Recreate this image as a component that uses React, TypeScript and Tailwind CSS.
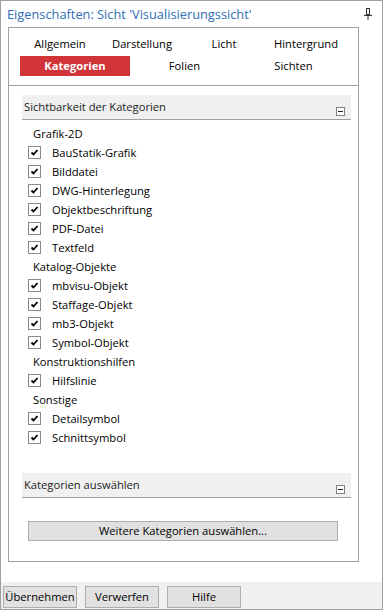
import React from 'react';

type Row = { label: string; group?: boolean };

const rows: Row[] = [
  { label: 'Grafik-2D', group: true },
  { label: 'BauStatik-Grafik' },
  { label: 'Bilddatei' },
  { label: 'DWG-Hinterlegung' },
  { label: 'Objektbeschriftung' },
  { label: 'PDF-Datei' },
  { label: 'Textfeld' },
  { label: 'Katalog-Objekte', group: true },
  { label: 'mbvisu-Objekt' },
  { label: 'Staffage-Objekt' },
  { label: 'mb3-Objekt' },
  { label: 'Symbol-Objekt' },
  { label: 'Konstruktionshilfen', group: true },
  { label: 'Hilfslinie' },
  { label: 'Sonstige', group: true },
  { label: 'Detailsymbol' },
  { label: 'Schnittsymbol' },
];

function Check() {
  return (
    <span className="w-[13px] h-[13px] border border-[#8a8a8a] bg-white flex items-center justify-center shrink-0">
      <svg width="9" height="9" viewBox="0 0 9 9">
        <path d="M1.5 4.5 L3.5 6.5 L7.5 2" fill="none" stroke="#000" strokeWidth="1.8" />
      </svg>
    </span>
  );
}

function Collapse() {
  return (
    <span className="w-[9px] h-[9px] border border-[#808080] bg-white flex items-center justify-center">
      <span className="w-[5px] h-px bg-[#222]" />
    </span>
  );
}

function SectionHeader({ title }: { title: string }) {
  return (
    <div className="h-[25px] bg-[#f0f0f0] border-b border-[#a0a0a0] flex items-center justify-between pl-[2px] pr-[6px]">
      <span className="text-[#222]">{title}</span>
      <span className="mt-[9px]">
        <Collapse />
      </span>
    </div>
  );
}

function Tab({ label, w, active }: { label: string; w: string; active?: boolean }) {
  return (
    <div
      className={`${w} h-[20px] flex items-center justify-center ${
        active ? 'bg-[#d13438] text-white font-bold' : 'text-black'
      }`}
    >
      {label}
    </div>
  );
}

function FooterButton({ label }: { label: string }) {
  return (
    <button className="w-[74px] h-[22px] bg-[#e1e1e1] border border-[#adadad] text-black flex items-center justify-center">
      {label}
    </button>
  );
}

export default function App() {
  return (
    <div
      className="w-[383px] h-[610px] bg-white border border-[#a0a0a0] flex flex-col text-[11.2px] leading-none"
      style={{ fontFamily: '"Open Sans", "Noto Sans", sans-serif' }}
    >
      {/* Title */}
      <div className="h-[26px] flex items-center justify-between pl-[6px] pr-[10px]">
        <span className="text-[12.8px] text-[#2e6db4]">Eigenschaften: Sicht 'Visualisierungssicht'</span>
        <svg width="8" height="12" viewBox="0 0 8 12">
          <rect x="2.5" y="0.5" width="3" height="6" fill="none" stroke="#333" />
          <path d="M0 7.5 H8" stroke="#333" />
          <path d="M4 8 V12" stroke="#333" />
        </svg>
      </div>

      {/* Panel */}
      <div className="ml-[7px] w-[351px] h-[535px] border border-[#a0a0a0] flex flex-col">
        <div className="h-[58px] border-b border-[#a0a0a0] pt-[6px]">
          <div className="flex ml-[10px]">
            <Tab label="Allgemein" w="w-[82px]" />
            <Tab label="Darstellung" w="w-[82px]" />
            <Tab label="Licht" w="w-[82px]" />
            <Tab label="Hintergrund" w="w-[82px]" />
          </div>
          <div className="flex ml-[11px] mt-[2px]">
            <Tab label="Kategorien" w="w-[110px]" active />
            <Tab label="Folien" w="w-[109px]" />
            <Tab label="Sichten" w="w-[109px]" />
          </div>
        </div>

        <div className="ml-[13px] w-[329px] mt-[9px]">
          <SectionHeader title="Sichtbarkeit der Kategorien" />
          <div className="pt-[4px] flex flex-col">
            {rows.map(r =>
              r.group ? (
                <div key={r.label} className="h-[19px] flex items-center pl-[11px] text-black">
                  {r.label}
                </div>
              ) : (
                <div key={r.label} className="h-[19px] flex items-center pl-[6px] gap-[11px] text-black">
                  <Check />
                  <span>{r.label}</span>
                </div>
              )
            )}
          </div>

          <div className="mt-[26px]">
            <SectionHeader title="Kategorien auswählen" />
          </div>
          <div className="pt-[23px] pl-[6px]">
            <button className="w-[310px] h-[20px] bg-[#e1e1e1] border border-[#adadad] text-black flex items-center justify-center">
              Weitere Kategorien auswählen...
            </button>
          </div>
        </div>
      </div>

      <div className="flex-1" />

      {/* Footer */}
      <div className="h-[27px] bg-[#f0f0f0] flex items-start gap-[8px] pl-[2px] pt-[4px]">
        <FooterButton label="Übernehmen" />
        <FooterButton label="Verwerfen" />
        <FooterButton label="Hilfe" />
      </div>
    </div>
  );
}
